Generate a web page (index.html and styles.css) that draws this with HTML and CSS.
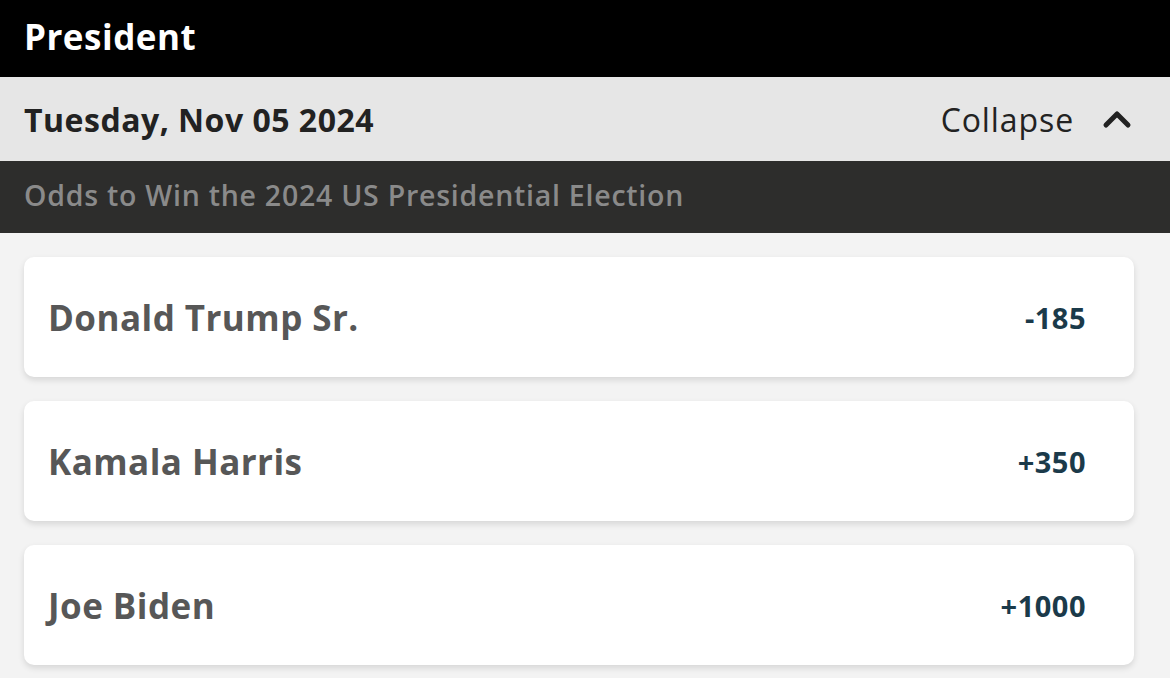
FILE: index.html
```html
<!DOCTYPE html>
<html>
<head>
<meta charset="utf-8">
<link rel="stylesheet" href="styles.css">
</head>
<body>
<div class="page">
  <header class="title-bar">President</header>
  <div class="date-bar">
    <span class="date">Tuesday, Nov 05 2024</span>
    <span class="collapse">Collapse
      <svg class="chev" width="30" height="20" viewBox="0 0 30 20"><path d="M4 16 L15 5 L26 16" fill="none" stroke="#222" stroke-width="5" stroke-linecap="round" stroke-linejoin="round"/></svg>
    </span>
  </div>
  <div class="market-bar">Odds to Win the 2024 US Presidential Election</div>
  <div class="list">
    <div class="card"><span class="name">Donald Trump Sr.</span><span class="odds">-185</span></div>
    <div class="card"><span class="name">Kamala Harris</span><span class="odds">+350</span></div>
    <div class="card"><span class="name">Joe Biden</span><span class="odds">+1000</span></div>
  </div>
</div>
</body>
</html>
```
FILE: styles.css
```css
html, body {
  margin: 0;
  padding: 0;
  background: #f3f3f3;
  font-family: "Open Sans", "Noto Sans", sans-serif;
}
.page {
  width: 1170px;
  height: 678px;
  overflow: hidden;
}
.title-bar {
  height: 77px;
  background: #000;
  color: #fff;
  font-weight: 700;
  font-size: 35px;
  letter-spacing: 0.5px;
  display: flex;
  align-items: center;
  padding-left: 24px;
  box-sizing: border-box;
  padding-bottom: 4px;
}
.date-bar {
  height: 84px;
  background: #e6e6e6;
  display: flex;
  align-items: center;
  justify-content: space-between;
  padding: 0 38px 0 24px;
  color: #222;
  box-sizing: border-box;
}
.date {
  font-weight: 700;
  font-size: 32px;
  letter-spacing: 0.5px;
}
.collapse {
  font-size: 32px;
  letter-spacing: 0.9px;
  display: flex;
  align-items: center;
  gap: 28px;
}
.market-bar {
  height: 72px;
  background: #2d2d2c;
  color: #8a8a8a;
  font-size: 28.5px;
  font-weight: 600;
  letter-spacing: 0.75px;
  display: flex;
  align-items: center;
  padding-left: 24px;
  padding-bottom: 4px;
  box-sizing: border-box;
}
.list {
  padding: 24px 36px 0 24px;
  display: flex;
  flex-direction: column;
  gap: 24px;
}
.card {
  height: 120px;
  background: #fff;
  border-radius: 10px;
  box-shadow: 0 3px 6px rgba(0,0,0,0.12);
  display: flex;
  align-items: center;
  justify-content: space-between;
  padding: 0 48px 0 24px;
  box-sizing: border-box;
}
.name {
  font-weight: 700;
  font-size: 35px;
  letter-spacing: 0.45px;
  color: #575757;
}
.odds {
  font-weight: 700;
  font-size: 29px;
  letter-spacing: 0.5px;
  color: #1b3a4a;
}
```
